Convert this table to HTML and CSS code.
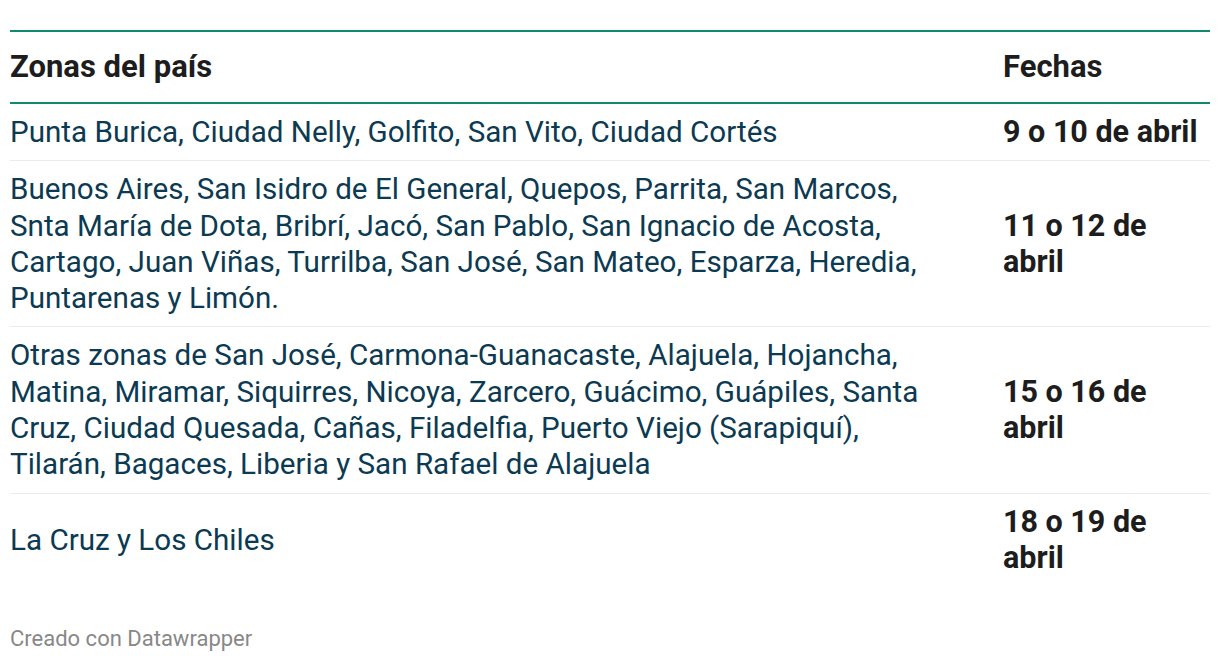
FILE: index.html
```html
<!DOCTYPE html>
<html lang="es">
<head>
<meta charset="utf-8">
<link rel="stylesheet" href="styles.css">
</head>
<body>
<div class="chart">
  <table class="tbl">
    <thead>
      <tr><th class="zona">Zonas del país</th><th class="fecha">Fechas</th></tr>
    </thead>
    <tbody>
      <tr><td class="zona">Punta Burica, Ciudad Nelly, Golfito, San Vito, Ciudad Cortés</td><td class="fecha">9 o 10 de abril</td></tr>
      <tr><td class="zona">Buenos Aires, San Isidro de El General, Quepos, Parrita, San Marcos, Snta María de Dota, Bribrí, Jacó, San Pablo, San Ignacio de Acosta, Cartago, Juan Viñas, Turrilba, San José, San Mateo, Esparza, Heredia, Puntarenas y Limón.</td><td class="fecha">11 o 12 de abril</td></tr>
      <tr><td class="zona">Otras zonas de San José, Carmona-Guanacaste, Alajuela, Hojancha, Matina, Miramar, Siquirres, Nicoya, Zarcero, Guácimo, Guápiles, Santa Cruz, Ciudad Quesada, Cañas, Filadelfia, Puerto Viejo (Sarapiquí), Tilarán, Bagaces, Liberia y San Rafael de Alajuela</td><td class="fecha">15 o 16 de abril</td></tr>
      <tr class="last"><td class="zona">La Cruz y Los Chiles</td><td class="fecha">18 o 19 de abril</td></tr>
    </tbody>
  </table>
  <div class="footer">Creado con Datawrapper</div>
</div>
</body>
</html>
```

FILE: styles.css
```css
html, body { margin: 0; padding: 0; background: #fff; }
body { font-family: Roboto, "Noto Sans", sans-serif; }
.chart { padding: 30px 10px 0 10px; }
.tbl {
  width: 100%;
  table-layout: fixed;
  border-collapse: collapse;
  border-top: 2px solid #0e8a6e;
  font-size: 29.6px;
  line-height: 36.3px;
}
.tbl th {
  text-align: left;
  font-weight: 700;
  font-size: 31px;
  line-height: 36px;
  color: #1d1d1d;
  padding: 17px 0 17px 0;
  border-bottom: 2px solid #0e8a6e;
}
.tbl td {
  padding: 10px 0 10px 0;
  border-bottom: 1px solid #ececec;
  vertical-align: middle;
}
.tbl tr.last td { border-bottom: none; }
.tbl td.zona { color: #0b3a52; padding-right: 60px; }
.tbl td.fecha { color: #1d1d1d; font-weight: 700; font-size: 30.5px; }
.tbl .fecha { width: 207px; }
.footer {
  margin-top: 41px;
  font-size: 22px;
  color: #888;
  line-height: 24px;
}
```
